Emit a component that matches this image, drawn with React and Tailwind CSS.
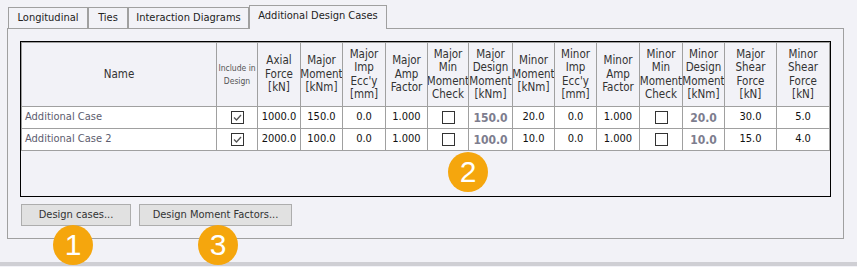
import React from "react";

const GRID =
  "grid grid-cols-[195px_41px_43px_42px_43px_42px_41px_44px_42px_42px_43px_43px_42px_52px_53px]";

const FONT = '"DejaVu Sans Condensed", "Liberation Sans", Arial, sans-serif';

const headers = [
  ["Name"],
  ["Include in", "Design"],
  ["Axial", "Force", "[kN]"],
  ["Major", "Moment", "[kNm]"],
  ["Major", "Imp", "Ecc'y", "[mm]"],
  ["Major", "Amp", "Factor"],
  ["Major", "Min", "Moment", "Check"],
  ["Major", "Design", "Moment", "[kNm]"],
  ["Minor", "Moment", "[kNm]"],
  ["Minor", "Imp", "Ecc'y", "[mm]"],
  ["Minor", "Amp", "Factor"],
  ["Minor", "Min", "Moment", "Check"],
  ["Minor", "Design", "Moment", "[kNm]"],
  ["Major", "Shear", "Force", "[kN]"],
  ["Minor", "Shear", "Force", "[kN]"],
];

const rows = [
  ["Additional Case", true, "1000.0", "150.0", "0.0", "1.000", false, "150.0", "20.0", "0.0", "1.000", false, "20.0", "30.0", "5.0"],
  ["Additional Case 2", true, "2000.0", "100.0", "0.0", "1.000", false, "100.0", "10.0", "0.0", "1.000", false, "10.0", "15.0", "4.0"],
];

function CheckBox({ checked }) {
  return (
    <div className="w-[13px] h-[13px] border border-[#333333] bg-white flex items-center justify-center">
      {checked && (
        <svg width="11" height="11" viewBox="0 0 11 11">
          <path d="M2 5.5 L4.5 8 L9 3" fill="none" stroke="#555555" strokeWidth="1.3" />
        </svg>
      )}
    </div>
  );
}

function Badge({ n, className }) {
  return (
    <div
      className={
        "absolute w-[40px] h-[40px] rounded-full bg-[#f5a60d] text-white flex items-center justify-center text-[30px] leading-none " +
        className
      }
      style={{ fontFamily: '"Liberation Sans", Arial, sans-serif' }}
    >
      {n}
    </div>
  );
}

export default function App() {
  return (
    <div
      className="relative w-[857px] h-[267px] bg-[#f2f2f7] text-[11px] text-[#222222] overflow-hidden"
      style={{ fontFamily: FONT }}
    >
      {/* Tabs */}
      <div className="flex items-end pt-[5px] pl-[8px] h-[28px]">
        <div className="h-[21px] w-[80px] border-t border-l border-r border-[#a0a0a0] flex items-center justify-center">
          Longitudinal
        </div>
        <div className="h-[21px] w-[40px] border-t border-l border-r border-[#a0a0a0] flex items-center justify-center">
          Ties
        </div>
        <div className="h-[21px] w-[121px] border-t border-l border-r border-[#a0a0a0] flex items-center justify-center">
          Interaction Diagrams
        </div>
        <div className="relative z-10 h-[24px] -mb-px w-[138px] border-t border-l border-r border-[#a0a0a0] bg-[#f2f2f7] flex items-center justify-center pb-[2px]">
          Additional Design Cases
        </div>
      </div>

      {/* Panel */}
      <div className="ml-[7px] w-[837px] h-[211px] border border-[#a0a0a0] p-[12px] flex flex-col">
        <div className="h-[156px] border border-black">
          <div className="border-t border-l border-[#a0a0a0]">
            {/* Header */}
            <div className={GRID + " h-[64px] border-b border-[#a0a0a0]"}>
              {headers.map((h, i) => (
                <div
                  key={i}
                  className={
                    "border-r border-[#a0a0a0] overflow-hidden flex flex-col items-center justify-center whitespace-nowrap " +
                    (i === 1
                      ? "text-[8.5px] leading-[13px] text-[#555555]"
                      : "text-[11.5px] leading-[13.5px] text-[#333333]")
                  }
                >
                  {h.map((line, j) => (
                    <span key={j}>{line}</span>
                  ))}
                </div>
              ))}
            </div>
            {/* Rows */}
            {rows.map((r, ri) => (
              <div key={ri} className={GRID + " h-[22px] border-b border-[#a0a0a0] bg-white"}>
                {r.map((v, ci) => {
                  if (typeof v === "boolean") {
                    return (
                      <div key={ci} className="border-r border-[#a0a0a0] flex items-center justify-center">
                        <CheckBox checked={v} />
                      </div>
                    );
                  }
                  if (ci === 0) {
                    return (
                      <div key={ci} className="border-r border-[#a0a0a0] flex items-center pl-[3px] text-[#5c5c6e]">
                        {v}
                      </div>
                    );
                  }
                  if (ci === 7 || ci === 12) {
                    return (
                      <div key={ci} className="border-r border-[#a0a0a0] flex items-center justify-center font-bold text-[12px] text-[#7d7d8e]">
                        {v}
                      </div>
                    );
                  }
                  return (
                    <div key={ci} className="border-r border-[#a0a0a0] flex items-center justify-center text-[#111111]">
                      {v}
                    </div>
                  );
                })}
              </div>
            ))}
          </div>
        </div>

        {/* Buttons */}
        <div className="flex gap-[8px] mt-[7px] ml-px">
          <button className="w-[110px] h-[22px] bg-[#e1e1e1] border border-[#adadad] text-[#333333] flex items-center justify-center">
            Design cases...
          </button>
          <button className="w-[153px] h-[22px] bg-[#e1e1e1] border border-[#adadad] text-[#333333] flex items-center justify-center">
            Design Moment Factors...
          </button>
        </div>
      </div>

      {/* Bottom bar */}
      <div className="absolute left-0 right-0 top-[262px] h-[4px] bg-[#cfcfd4]" />

      {/* Badges */}
      <Badge n="1" className="left-[53px] top-[225px]" />
      <Badge n="3" className="left-[198px] top-[225px]" />
      <Badge n="2" className="left-[448px] top-[152px]" />
    </div>
  );
}
